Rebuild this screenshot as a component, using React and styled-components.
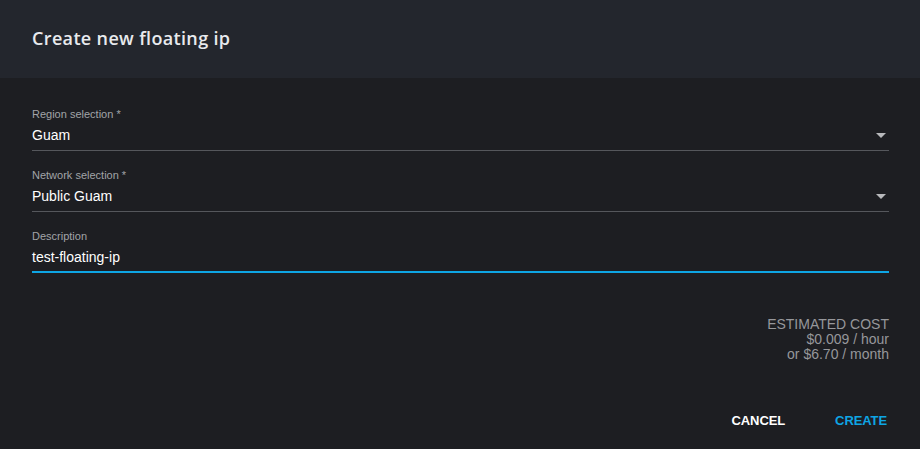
import React from 'react';
import styled, {createGlobalStyle} from 'styled-components';

const GlobalStyle = createGlobalStyle`
  html, body {
    margin: 0;
    padding: 0;
    background: #1d1e22;
  }
  body {
    font-family: "Open Sans", "Liberation Sans", sans-serif;
  }
`;

const Dialog = styled.div`
  width: 920px;
  height: 449px;
  background: #1d1e22;
  display: flex;
  flex-direction: column;
`;

const Header = styled.header`
  height: 78px;
  background: #23262d;
  display: flex;
  align-items: center;
  padding: 0 32px;
  box-sizing: border-box;
`;

const Title = styled.h2`
  margin: 0;
  font-size: 18px;
  font-weight: 600;
  color: #e8eaed;
  letter-spacing: 0.35px;
  padding-bottom: 3px;
`;

const Body = styled.div`
  flex: 1;
  display: flex;
  flex-direction: column;
  padding: 28px 31px 0 32px;
`;

const Field = styled.label`
  display: flex;
  flex-direction: column;
  height: 45px;
  box-sizing: border-box;
  padding-top: 1px;
  border-bottom: ${p => (p.$focused ? '2px solid #0ea5e4' : '1px solid #55575c')};
  position: relative;
  & + & {
    margin-top: 16px;
  }
`;

const Label = styled.span`
  font-family: "Liberation Sans", Arial, sans-serif;
  font-size: 11px;
  color: #a2a4a8;
  line-height: 14px;
`;

const Value = styled.span`
  font-family: "Liberation Sans", Arial, sans-serif;
  font-size: 14px;
  color: #ffffff;
  line-height: 18px;
  margin-top: 5px;
`;

const Arrow = styled.span`
  position: absolute;
  right: 3px;
  top: 27px;
  width: 0;
  height: 0;
  border-left: 5px solid transparent;
  border-right: 5px solid transparent;
  border-top: 5px solid #b8b9bc;
`;

const Cost = styled.div`
  margin-top: 44px;
  align-self: flex-end;
  text-align: right;
  font-family: "Liberation Sans", Arial, sans-serif;
  font-size: 14px;
  line-height: 15px;
  color: #96979b;
`;

const Actions = styled.div`
  margin-top: auto;
  display: flex;
  justify-content: flex-end;
  gap: 50px;
  padding: 0 2px 21px 0;
`;

const Button = styled.button`
  background: none;
  border: none;
  padding: 0;
  font-family: "Liberation Sans", Arial, sans-serif;
  font-size: 13px;
  font-weight: 700;
  letter-spacing: -0.1px;
  color: ${p => (p.$primary ? '#0ea5e4' : '#ffffff')};
  cursor: pointer;
`;

const fields = [
  {label: 'Region selection *', value: 'Guam', select: true},
  {label: 'Network selection *', value: 'Public Guam', select: true},
  {label: 'Description', value: 'test-floating-ip', focused: true},
];

export default function App() {
  return (
    <>
      <GlobalStyle/>
      <Dialog>
        <Header>
          <Title>Create new floating ip</Title>
        </Header>
        <Body>
          {fields.map(f => (
            <Field key={f.label} $focused={f.focused}>
              <Label>{f.label}</Label>
              <Value>{f.value}</Value>
              {f.select && <Arrow/>}
            </Field>
          ))}
          <Cost>
            <div>ESTIMATED COST</div>
            <div>$0.009 / hour</div>
            <div>or $6.70 / month</div>
          </Cost>
          <Actions>
            <Button>CANCEL</Button>
            <Button $primary>CREATE</Button>
          </Actions>
        </Body>
      </Dialog>
    </>
  );
}
